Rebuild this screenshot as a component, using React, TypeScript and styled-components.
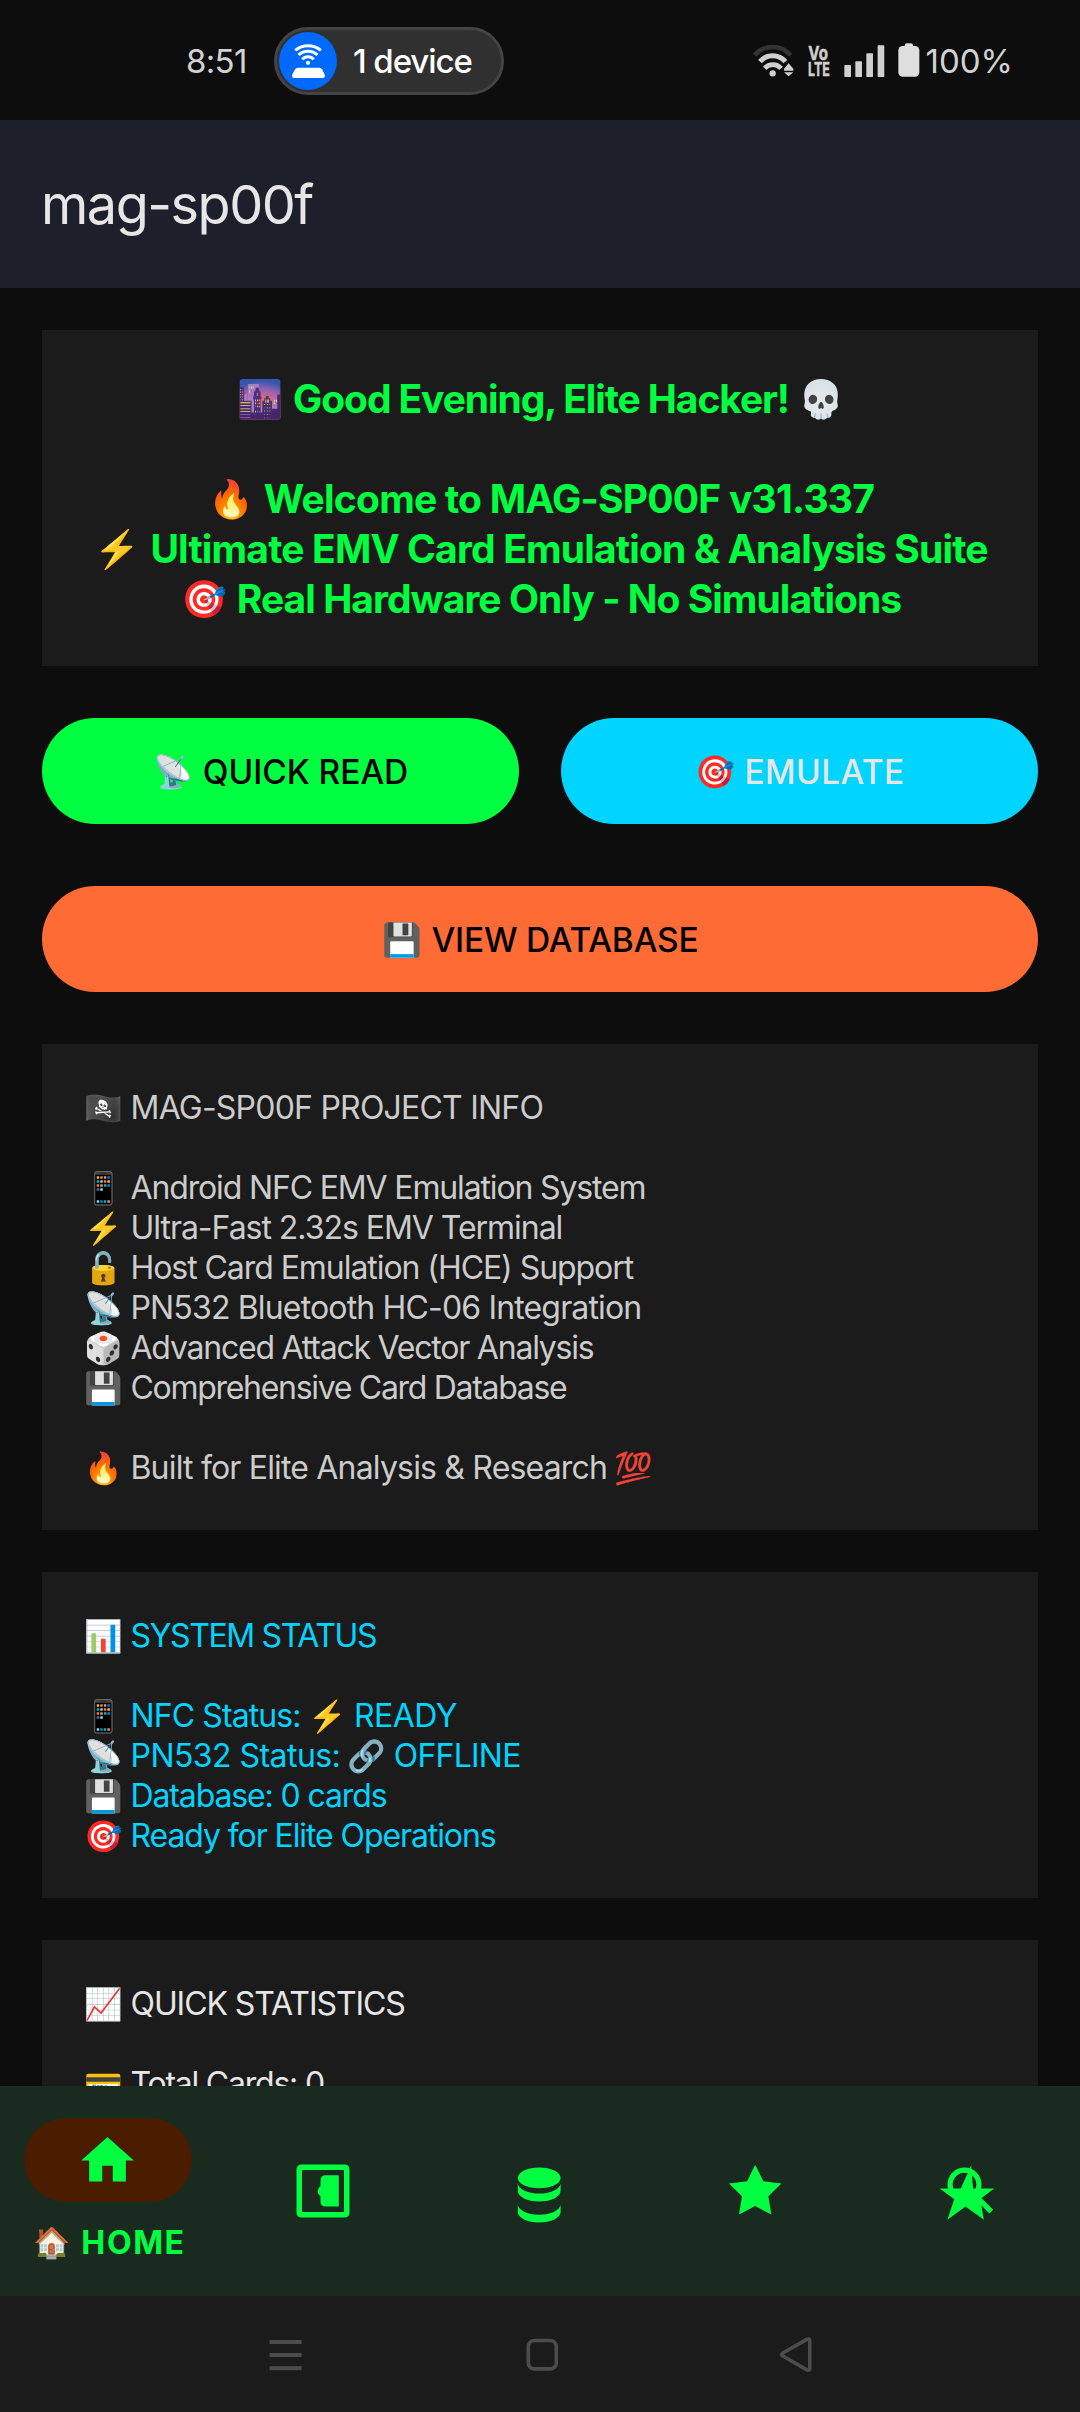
import React from 'react';
import styled, { createGlobalStyle } from 'styled-components';

const GREEN = '#00ff41';
const CYAN = '#00d4ff';
const ORANGE = '#ff6b35';
const LIGHT = '#e6e6e6';
const MUTED = '#cccccc';
const SURFACE = '#1b1b1b';

const GlobalStyle = createGlobalStyle`
  *, *::before, *::after { box-sizing: border-box; }
  body { margin: 0; background: #0d0d0d; }
`;

const Screen = styled.div`
  display: flex;
  flex-direction: column;
  width: 1080px;
  height: 2412px;
  overflow: hidden;
  background: #0d0d0d;
  font-family: Inter, Roboto, 'Liberation Sans', 'Noto Color Emoji', sans-serif;
  font-kerning: normal;
`;

const Text = styled.span<{ $track?: number }>`
  letter-spacing: ${(p) => p.$track ?? 0}px;
  white-space: pre;
`;

const Emoji = styled.span<{ $size: number; $width: number }>`
  display: inline-flex;
  justify-content: center;
  flex: none;
  width: ${(p) => p.$width}px;
  font-family: 'Noto Color Emoji', sans-serif;
  font-size: ${(p) => p.$size}px;
  font-weight: 400;
  letter-spacing: 0;
  line-height: 1;
`;

/* ---------- status bar ---------- */

const StatusBar = styled.header`
  display: flex;
  align-items: center;
  flex: none;
  height: 120px;
  padding: 2px 67px 0 186px;
  color: #d2d2d2;
  font-size: 33px;
  line-height: 40px;
`;

const Clock = styled(Text)`
  width: 88px;
`;

const DevicePill = styled.div`
  display: flex;
  align-items: center;
  gap: 16px;
  width: 230px;
  height: 68px;
  padding: 2px;
  border: 3px solid #444444;
  border-radius: 34px;
  background: #303030;
  color: #ffffff;
  font-weight: 500;
`;

const StatusIcons = styled.div`
  display: flex;
  align-items: flex-end;
  gap: 14px;
  height: 32px;
  margin-left: auto;

  svg { display: block; flex: none; overflow: visible; }
`;

const BatteryLevel = styled(Text)`
  margin-left: 6px;
`;

function HotspotIcon() {
  return (
    <svg width="58" height="58" viewBox="0 0 58 58">
      <circle cx="29" cy="29" r="29" fill="#006aff" />
      <g fill="none" stroke="#fff" strokeWidth="3">
        <path d="M16.3 18.4A20 20 0 0 1 41.9 18.4" />
        <path d="M19.6 23A13.6 13.6 0 0 1 38.4 23" />
        <path d="M23.3 27.4A7.4 7.4 0 0 1 34.7 27.4" />
      </g>
      <circle cx="29" cy="30.8" r="2.1" fill="#fff" />
      <path d="M19 35.7H40.4Q42.2 35.7 43 37.3L45.6 42.6Q46.6 46 43.6 46H15.2Q12.2 46 13.2 42.6L16.2 37.3Q17.2 35.7 19 35.7Z" fill="#fff" />
    </svg>
  );
}

function WifiIcon() {
  return (
    <svg width="42" height="34" viewBox="38 40 126 102">
      <g fill="none" strokeWidth="14">
        <path d="M46 77A71 71 0 0 1 154 77" stroke="#333" />
        <path d="M62 96A50 50 0 0 1 138 96" stroke="#d0d0d0" strokeWidth="15" />
        <path d="M76 116A33 33 0 0 1 125 116" stroke="#d0d0d0" />
      </g>
      <circle cx="100" cy="131" r="9.5" fill="#d0d0d0" />
      <path d="M148 101L162 117V123H134V117ZM134 128H162L148 140Z" fill="#d0d0d0" />
    </svg>
  );
}

function VolteIcon() {
  return (
    <svg width="22" height="31" viewBox="0 0 22 31" fill="#d0d0d0" stroke="#d0d0d0" strokeWidth="0.5" fontFamily="Inter, sans-serif" fontWeight="700" fontSize="19">
      <text x="0.3" y="14" textLength="19.6" lengthAdjust="spacingAndGlyphs">Vo</text>
      <text x="0" y="29.7" textLength="21.8" lengthAdjust="spacingAndGlyphs">LTE</text>
    </svg>
  );
}

function SignalIcon() {
  return (
    <svg width="40.3" height="32.3" viewBox="309 44 121 97" fill="#d0d0d0">
      <rect x="310" y="104" width="20" height="36" rx="2" />
      <rect x="343" y="93" width="20" height="47" rx="2" />
      <rect x="376" y="69" width="20" height="71" rx="2" />
      <rect x="410" y="45" width="20" height="95" rx="2" />
    </svg>
  );
}

function BatteryIcon() {
  return (
    <svg width="21.7" height="34" viewBox="473 39 65 102" fill="#dedede">
      <rect x="474" y="48" width="63" height="92" rx="13" />
      <rect x="493" y="40" width="25" height="20" rx="7" />
    </svg>
  );
}

/* ---------- app bar ---------- */

const AppBar = styled.div`
  display: flex;
  align-items: center;
  flex: none;
  height: 168px;
  padding: 2px 41px 0;
  background: #1d1f2a;
  color: ${LIGHT};
  font-size: 54px;
  line-height: 64px;
`;

/* ---------- content ---------- */

const Content = styled.main`
  display: flex;
  flex-direction: column;
  flex: 1;
  gap: 42px;
  min-height: 0;
  padding: 42px 42px 0;
  overflow: hidden;
`;

const WelcomeCard = styled.section`
  display: flex;
  flex-direction: column;
  flex: none;
  height: 336px;
  padding: 44px 41px 42px 43px;
  background: ${SURFACE};
  color: ${GREEN};
  font-size: 39px;
  font-weight: 700;
`;

const WelcomeLine = styled.div`
  display: flex;
  align-items: center;
  justify-content: center;
  gap: 9px;
  height: 50px;
  line-height: 50px;
  white-space: nowrap;
`;

const InfoCard = styled.section<{ $color: string }>`
  display: flex;
  flex-direction: column;
  flex: none;
  padding: 44px 42px 42px;
  background: ${SURFACE};
  color: ${(p) => p.$color};
  font-size: 32px;
`;

const InfoLine = styled.div`
  display: flex;
  align-items: center;
  gap: 7px;
  height: 40px;
  line-height: 40px;
`;

const Actions = styled.div`
  display: flex;
  flex-direction: column;
  flex: none;
  gap: 62px;
  padding: 10px 0;
`;

const ActionRow = styled.div`
  display: flex;
  gap: 42px;
`;

const ActionButton = styled.button<{ $bg: string; $fg: string }>`
  display: flex;
  align-items: center;
  justify-content: center;
  flex: 1;
  gap: 9px;
  height: 106px;
  padding: 2px 0 0 1px;
  border: 0;
  border-radius: 53px;
  background: ${(p) => p.$bg};
  color: ${(p) => p.$fg};
  font: 500 33.5px/40px Inter, sans-serif;
`;

/* ---------- bottom navigation ---------- */

const BottomNav = styled.nav`
  display: grid;
  grid-template-columns: repeat(5, 1fr);
  flex: none;
  height: 210px;
  background: #192b1e;
  color: ${GREEN};

  svg { display: block; margin-left: -1px; overflow: visible; }
`;

const NavItem = styled.div`
  display: flex;
  flex-direction: column;
  align-items: center;
  justify-content: center;
`;

const ActiveNavItem = styled(NavItem)`
  justify-content: flex-start;
  gap: 21px;
  padding-top: 32px;
`;

const Indicator = styled.div`
  display: flex;
  align-items: center;
  justify-content: center;
  width: 168px;
  height: 84px;
  border-radius: 42px;
  background: #4a1d00;
`;

const NavLabel = styled.div`
  display: flex;
  align-items: center;
  gap: 11px;
  height: 40px;
  padding-left: 3px;
  font-size: 32px;
  font-weight: 700;
  line-height: 40px;
`;

const SystemNav = styled.footer`
  display: flex;
  align-items: center;
  flex: none;
  gap: 215px;
  height: 116px;
  padding-left: 266px;
  background: ${SURFACE};
`;

function HomeIcon() {
  return (
    <svg width="63" height="63" viewBox="0 0 24 24" fill="currentColor">
      <path d="M10 20v-6h4v6h5v-8h3L12 3 2 12h3v8z" />
    </svg>
  );
}

function ReaderIcon() {
  return (
    <svg width="63" height="63" viewBox="0 0 63 63" fill="currentColor">
      <path
        fillRule="evenodd"
        d="M9.8 4.5H52.2Q57.5 4.5 57.5 9.8V52.2Q57.5 57.5 52.2 57.5H9.8Q4.5 57.5 4.5 52.2V9.8Q4.5 4.5 9.8 4.5ZM10 10V52H52V10Z"
      />
      <path d="M33.7 15.2H46.8V46.5H33.7Q28.5 46.5 28.5 41.3V36.2Q25.6 34.4 25.6 31.2T28.5 26.2V20.4Q28.5 15.2 33.7 15.2Z" />
    </svg>
  );
}

function DatabaseIcon() {
  return (
    <svg width="63" height="63" viewBox="0 0 63 63" fill="currentColor">
      <ellipse cx="31.2" cy="17.9" rx="21.4" ry="10.4" />
      <path d="M9.8 23C9.8 28.8 19.4 33.6 31.2 33.6S52.6 28.8 52.6 23V31C52.6 36.8 43 41.5 31.2 41.5S9.8 36.8 9.8 31Z" />
      <path d="M9.8 44.2C9.8 50 19.4 54.7 31.2 54.7S52.6 50 52.6 44.2V52.1C52.6 57.9 43 62.6 31.2 62.6S9.8 57.9 9.8 52.1Z" />
    </svg>
  );
}

function StarIcon() {
  return (
    <svg width="63" height="63" viewBox="0 0 63 63" fill="currentColor">
      <path d="M31.2 4.8L39.3 21.2L57.4 23.6L44.4 36.2L47.3 54.6L31.2 46.1L15 54.6L18 36.2L5 23.6L23.1 21.2Z" />
    </svg>
  );
}

function AnalysisIcon() {
  return (
    <svg width="63" height="63" viewBox="0 0 63 63" fill="currentColor">
      <circle cx="24.5" cy="24.5" r="14.4" fill="none" stroke="currentColor" strokeWidth="5.2" />
      <path d="M36 36.3L51.3 51.6" stroke="currentColor" strokeWidth="5.2" />
      <path d="M31.2 5.2L33 28.5H54.2L40.2 39L43.9 59.8L25.5 46.5L7.4 59.8L14.2 39.3L-0.2 28.5H20.8Z" />
    </svg>
  );
}

/* ---------- data ---------- */

type Part = { emoji: string } | { text: string; track: number };
const e = (emoji: string): Part => ({ emoji });
const t = (text: string, track: number): Part => ({ text, track });

const welcome: Part[][] = [
  [e('🌆'), t('Good Evening, Elite Hacker!', -1.09), e('💀')],
  [],
  [e('🔥'), t('Welcome to MAG-SP00F v31.337', -0.76)],
  [e('⚡'), t('Ultimate EMV Card Emulation & Analysis Suite', -0.83)],
  [e('🎯'), t('Real Hardware Only - No Simulations', -0.96)],
];

const project: Part[][] = [
  [e('🏴‍☠️'), t('MAG-SP00F PROJECT INFO', -0.78)],
  [],
  [e('📱'), t('Android NFC EMV Emulation System', -1.15)],
  [e('⚡'), t('Ultra-Fast 2.32s EMV Terminal', -1.03)],
  [e('🔓'), t('Host Card Emulation (HCE) Support', -1.06)],
  [e('📡'), t('PN532 Bluetooth HC-06 Integration', -0.84)],
  [e('🎲'), t('Advanced Attack Vector Analysis', -1.22)],
  [e('💾'), t('Comprehensive Card Database', -1.3)],
  [],
  [e('🔥'), t('Built for Elite Analysis & Research', -0.82), e('💯')],
];

const system: Part[][] = [
  [e('📊'), t('SYSTEM STATUS', -1.36)],
  [],
  [e('📱'), t('NFC Status:', -0.9), e('⚡'), t('READY', -0.6)],
  [e('📡'), t('PN532 Status:', -0.55), e('🔗'), t('OFFLINE', -0.77)],
  [e('💾'), t('Database: 0 cards', -1.12)],
  [e('🎯'), t('Ready for Elite Operations', -1.09)],
];

const statistics: Part[][] = [
  [e('📈'), t('QUICK STATISTICS', -1.08)],
  [],
  [e('💳'), t('Total Cards: 0', -1.22)],
];

function Parts({ parts, size, width }: { parts: Part[]; size: number; width: number }) {
  return (
    <>
      {parts.map((p, i) =>
        'emoji' in p ? (
          <Emoji key={i} $size={size} $width={width}>{p.emoji}</Emoji>
        ) : (
          <Text key={i} $track={p.track}>{p.text}</Text>
        ),
      )}
    </>
  );
}

function Info({ lines, color }: { lines: Part[][]; color: string }) {
  return (
    <InfoCard $color={color}>
      {lines.map((parts, i) => (
        <InfoLine key={i}>
          <Parts parts={parts} size={31} width={39.5} />
        </InfoLine>
      ))}
    </InfoCard>
  );
}

export default function App() {
  return (
    <Screen>
      <GlobalStyle />
      <StatusBar>
        <Clock $track={-0.66}>8:51</Clock>
        <DevicePill>
          <HotspotIcon />
          <Text $track={-1.07}>1 device</Text>
        </DevicePill>
        <StatusIcons>
          <WifiIcon />
          <VolteIcon />
          <SignalIcon />
          <BatteryIcon />
        </StatusIcons>
        <BatteryLevel>100%</BatteryLevel>
      </StatusBar>

      <AppBar>
        <Text $track={-1.5}>mag-sp00f</Text>
      </AppBar>

      <Content>
        <WelcomeCard>
          {welcome.map((parts, i) => (
            <WelcomeLine key={i}>
              <Parts parts={parts} size={37} width={47} />
            </WelcomeLine>
          ))}
        </WelcomeCard>

        <Actions>
          <ActionRow>
            <ActionButton $bg={GREEN} $fg="#000000">
              <Parts parts={[e('📡'), t('QUICK READ', -0.06)]} size={32} width={40} />
            </ActionButton>
            <ActionButton $bg={CYAN} $fg={LIGHT}>
              <Parts parts={[e('🎯'), t('EMULATE', 0.4)]} size={32} width={40} />
            </ActionButton>
          </ActionRow>
          <ActionRow>
            <ActionButton $bg={ORANGE} $fg="#000000">
              <Parts parts={[e('💾'), t('VIEW DATABASE', -0.2)]} size={32} width={40} />
            </ActionButton>
          </ActionRow>
        </Actions>

        <Info lines={project} color={MUTED} />
        <Info lines={system} color={CYAN} />
        <Info lines={statistics} color={LIGHT} />
      </Content>

      <BottomNav>
        <ActiveNavItem>
          <Indicator>
            <HomeIcon />
          </Indicator>
          <NavLabel>
            <Parts parts={[e('🏠'), t('HOME', 1.61)]} size={30} width={37} />
          </NavLabel>
        </ActiveNavItem>
        <NavItem><ReaderIcon /></NavItem>
        <NavItem><DatabaseIcon /></NavItem>
        <NavItem><StarIcon /></NavItem>
        <NavItem><AnalysisIcon /></NavItem>
      </BottomNav>

      <SystemNav>
        <svg width="40" height="40" viewBox="0 0 40 40" fill="#4c4c4c">
          <rect x="3.6" y="6" width="32" height="4" />
          <rect x="3.6" y="19" width="32" height="4" />
          <rect x="3.6" y="32.2" width="32" height="4" />
        </svg>
        <svg width="40" height="40" viewBox="0 0 40 40" fill="none" stroke="#4c4c4c" strokeWidth="3.6">
          <rect x="7.3" y="6.5" width="28" height="28.4" rx="6" />
        </svg>
        <svg width="40" height="40" viewBox="0 0 40 40" fill="none" stroke="#4c4c4c" strokeWidth="3.6">
          <path d="M30.8 5.4L6.8 19Q4.2 20.5 6.8 22L30.8 35.9Q33.8 37.2 33.8 34V7.2Q33.8 3.9 30.8 5.4Z" />
        </svg>
      </SystemNav>
    </Screen>
  );
}
